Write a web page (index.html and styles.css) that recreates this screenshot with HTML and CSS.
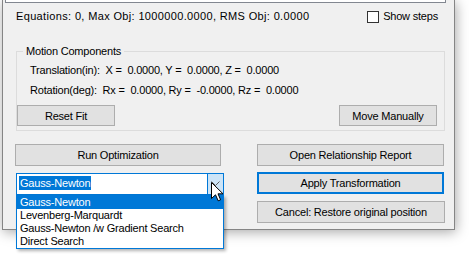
FILE: index.html
```html
<!DOCTYPE html>
<html lang="en">
<head>
  <meta charset="UTF-8">
  <title>Optimization</title>
  <link rel="stylesheet" href="styles.css">
</head>
<body>
  <div class="window">
    <div class="log"></div>
    <div class="status">
      <span class="eq">Equations: 0, Max Obj: 1000000.0000, RMS Obj: 0.0000</span>
      <label class="check"><span class="box"></span>Show steps</label>
    </div>
    <fieldset class="motion">
      <legend>Motion Components</legend>
      <p class="line">Translation(in):  X =  0.0000, Y =  0.0000, Z =  0.0000</p>
      <p class="line second">Rotation(deg):  Rx =  0.0000, Ry =  -0.0000, Rz =  0.0000</p>
      <div class="fit-row">
        <button class="btn">Reset Fit</button>
        <button class="btn">Move Manually</button>
      </div>
    </fieldset>
    <div class="actions">
      <button class="btn">Run Optimization</button>
      <button class="btn">Open Relationship Report</button>
      <div class="combo">
        <span class="value"><span class="sel">Gauss-Newton</span></span>
        <span class="arrow">
          <svg width="9" height="6" viewBox="0 0 9 6"><polyline points="0.5,0.5 4.5,4.5 8.5,0.5" fill="none" stroke="#606060" stroke-width="1"/></svg>
        </span>
        <ul class="list">
          <li class="on">Gauss-Newton</li>
          <li>Levenberg-Marquardt</li>
          <li>Gauss-Newton /w Gradient Search</li>
          <li>Direct Search</li>
        </ul>
        <svg class="cursor" width="13" height="20" viewBox="0 0 13 20">
          <path d="M0.5 0.5 L0.5 16.5 L4.5 12.8 L7.2 18.8 L9.6 17.8 L7 11.8 L12 11.8 Z" fill="#fff" stroke="#000" stroke-width="1" stroke-linejoin="miter"/>
        </svg>
      </div>
      <button class="btn primary">Apply Transformation</button>
      <span></span>
      <button class="btn">Cancel: Restore original position</button>
    </div>
  </div>
</body>
</html>
```

FILE: styles.css
```css
*{margin:0;padding:0;box-sizing:border-box;}
li{list-style:none;}
html, body{font-family:"Liberation Sans",Arial,sans-serif;font-size:11px;color:#000;letter-spacing:-0.2px;}
body{width:469px;height:259px;background:#fff;overflow:hidden;}

.window{position:relative;margin-left:2px;width:453px;height:230px;background:#f0f0f0;border:1px solid #858585;border-top:0;box-shadow:1px 2px 12px rgba(0,0,0,.35);}
.log{margin-left:2px;width:441px;height:3px;background:#fff;border:1px solid #828790;border-top:0;}

.status{display:flex;justify-content:space-between;align-items:center;margin-top:7px;height:13px;padding:0 16px 0 13px;line-height:13px;}
.status .eq{letter-spacing:0.35px;}
.check{display:flex;align-items:center;gap:4px;}
.check .box{width:12px;height:12px;background:#fff;border:1px solid #333;}

fieldset.motion{width:429px;margin:22px 0 0 13px;padding:0 7px 4px 0;border:1px solid #dcdcdc;}
fieldset.motion legend{margin-left:6px;padding:0 3px;line-height:13px;}
.line{margin-top:6px;padding-left:13px;line-height:13px;white-space:pre;}
.line.second{margin-top:7px;}
.fit-row{display:flex;justify-content:space-between;margin-top:8px;}
.fit-row .btn{width:98px;height:21px;}

.btn{display:block;font:inherit;letter-spacing:inherit;color:#000;background:#e1e1e1;border:1px solid #adadad;height:22px;line-height:20px;text-align:center;}
.btn.primary{border:2px solid #0078d7;line-height:18px;}

.actions{display:grid;grid-template-columns:206px 188px;column-gap:36px;row-gap:6px;margin:13px 0 0 12px;}
.actions .btn:nth-child(2){width:187px;}
.actions > .btn.primary{width:187px;}

.combo{position:relative;margin:1px 0 0 1px;width:208px;height:22px;background:#fff;border:1px solid #0078d7;display:flex;}
.combo .value{flex:1;padding:2px 0 0 2px;}
.combo .sel{display:inline-block;background:#0078d7;color:#fff;height:14px;line-height:14px;padding:0 1px;}
.combo .arrow{width:16px;background:#cce4f7;border-left:1px solid #0078d7;display:flex;align-items:center;justify-content:center;}
.combo .list{position:absolute;top:21px;left:-1px;width:208px;background:#fff;border:1px solid #0078d7;box-shadow:2px 2px 3px rgba(0,0,0,.3);z-index:2;}
.combo .list li{height:13px;line-height:13px;padding-left:3px;white-space:nowrap;}
.combo .list li.on{background:#0078d7;color:#fff;}
.combo .cursor{position:absolute;left:194px;top:8px;z-index:3;}
```
